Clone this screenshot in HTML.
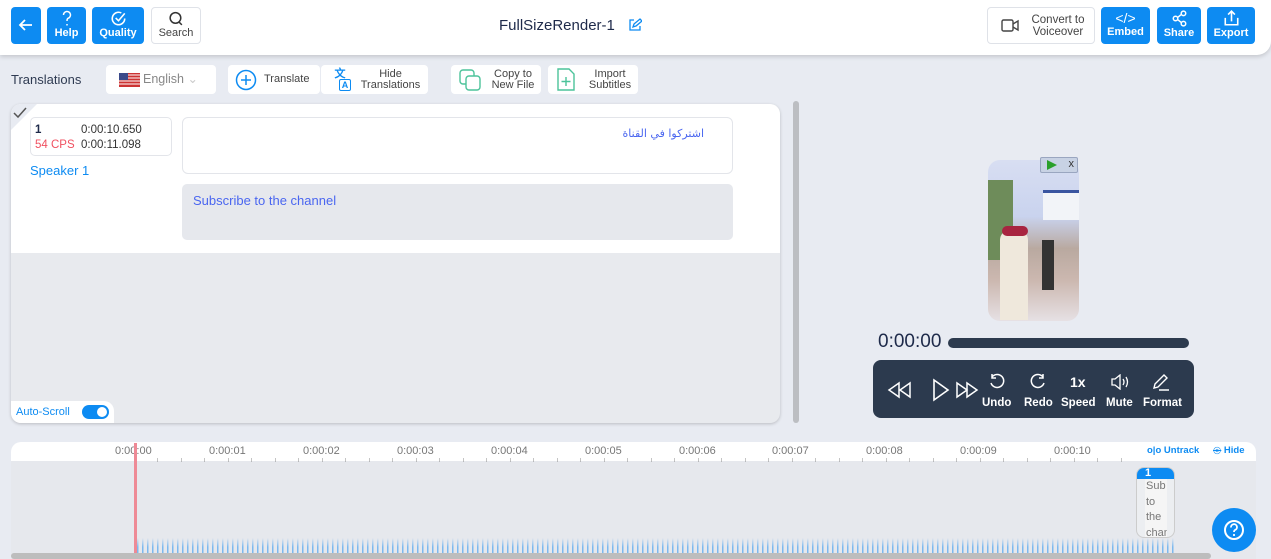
<!DOCTYPE html>
<html><head><meta charset="utf-8"><style>
*{box-sizing:border-box;margin:0;padding:0}
body{width:1271px;height:559px;overflow:hidden;background:#e8ebf2;font-family:"Liberation Sans","DejaVu Sans",sans-serif;position:relative}
.abs{position:absolute}
.hdr{left:0;top:0;width:1271px;height:55px;background:#fff;border-bottom-right-radius:14px;box-shadow:0 2px 4px rgba(0,0,0,.15)}
.bb{position:absolute;top:7px;height:37px;background:#0d8bf2;border-radius:4px;color:#fff;font-size:11px;font-weight:bold;text-align:center}
.bb svg{display:block;margin:3px auto 0}
.wb{position:absolute;background:#fff;border:1px solid #dfe2e8;border-radius:4px;color:#444;font-size:11px;text-align:center}
.tb{position:absolute;top:65px;height:29px;background:#fff;border-radius:4px;font-size:11px;color:#444;line-height:11px}
.tl{position:absolute;font-size:11px;color:#777;top:445px}
</style></head><body>
<div class="abs hdr"></div>
<div class="bb" style="left:11px;width:30px"><svg width="18" height="18" viewBox="0 0 18 18" style="margin-top:9px"><path d="M15 9H3M8 4L3 9l5 5" stroke="#fff" stroke-width="1.8" fill="none"/></svg></div>
<div class="bb" style="left:47px;width:39px"><svg width="16" height="17" viewBox="0 0 16 17"><path d="M4.5 5a3.5 3.5 0 1 1 4.5 3.3c-1 .5-1 1.2-1 2.7M8 14v1.5" stroke="#fff" stroke-width="1.5" fill="none"/></svg>Help</div>
<div class="bb" style="left:92px;width:52px"><svg width="17" height="17" viewBox="0 0 15 15"><path d="M13 7.5A5.5 5.5 0 1 1 10 2.6M5 7l2.5 2.5L13 3" stroke="#fff" stroke-width="1.4" fill="none"/></svg>Quality</div>
<div class="wb" style="left:151px;top:7px;width:50px;height:37px;font-size:11px"><svg width="16" height="16" viewBox="0 0 15 15" style="display:block;margin:3px auto 0"><circle cx="7" cy="6.5" r="5" stroke="#333" stroke-width="1.4" fill="none"/><path d="M10 10l3 3" stroke="#333" stroke-width="1.4"/></svg>Search</div>
<div class="abs" style="left:499px;top:17px;font-size:15px;color:#1e2a4a">FullSizeRender-1</div>
<svg class="abs" style="left:628px;top:18px" width="14" height="14" viewBox="0 0 14 14"><path d="M6 2H2v10h10V8M5 9l1-3 6-5 2 2-6 5z" stroke="#0d8bf2" stroke-width="1.3" fill="none"/></svg>
<div class="wb" style="left:987px;top:7px;width:108px;height:37px;color:#444;font-size:11.5px;line-height:12px;padding:6px 0 0 34px;text-align:center"><svg class="abs" style="left:13px;top:10px" width="19" height="15" viewBox="0 0 19 15"><rect x="1" y="2" width="11" height="11" rx="1.5" stroke="#444" stroke-width="1.4" fill="none"/><path d="M12 6l5-3v9l-5-3" stroke="#444" stroke-width="1.4" fill="none"/></svg>Convert to<br>Voiceover</div>
<div class="bb" style="left:1101px;width:49px"><div style="font-size:14px;margin-top:3px;font-weight:normal">&lt;/&gt;</div>Embed</div>
<div class="bb" style="left:1157px;width:44px"><svg width="17" height="17" viewBox="0 0 15 15"><circle cx="11" cy="3" r="2" stroke="#fff" fill="none" stroke-width="1.3"/><circle cx="4" cy="7.5" r="2" stroke="#fff" fill="none" stroke-width="1.3"/><circle cx="11" cy="12" r="2" stroke="#fff" fill="none" stroke-width="1.3"/><path d="M6 6.5l3-2.5M6 8.5l3 2.5" stroke="#fff" stroke-width="1.3"/></svg>Share</div>
<div class="bb" style="left:1207px;width:48px"><svg width="17" height="17" viewBox="0 0 15 15"><path d="M7.5 10V1M4.5 4l3-3 3 3M2 7v6h11V7" stroke="#fff" stroke-width="1.4" fill="none"/></svg>Export</div>

<div class="abs" style="left:11px;top:72px;font-size:13px;color:#2f3b52">Translations</div>
<div class="tb" style="left:106px;width:110px;font-size:12.5px;color:#888;padding-top:9px;padding-left:37px">English <span style="color:#ccc">&#8964;</span>
<svg class="abs" style="left:13px;top:8px" width="21" height="14" viewBox="0 0 21 14"><rect width="21" height="14" fill="#c33"/><path d="M0 2h21M0 5h21M0 8h21M0 11h21" stroke="#fff" stroke-width="1"/><rect width="9" height="7" fill="#3b4a8a"/></svg></div>
<div class="tb" style="left:228px;width:92px;padding:9px 0 0 36px">Translate<svg class="abs" style="left:7px;top:4px" width="22" height="22" viewBox="0 0 22 22"><circle cx="11" cy="11" r="9.5" stroke="#0d8bf2" stroke-width="1.5" fill="none"/><path d="M11 6v10M6 11h10" stroke="#0d8bf2" stroke-width="1.5"/></svg></div>
<div class="tb" style="left:321px;width:107px;padding:4px 0 0 32px;text-align:center">Hide<br>Translations<div class="abs" style="left:8px;top:4px;width:22px;height:22px;font-size:11px;color:#0d8bf2;font-weight:bold">文<span style="position:absolute;left:10px;top:10px;border:1.3px solid #0d8bf2;border-radius:2px;width:12px;height:12px;font-size:9px;line-height:10px;text-align:center">A</span></div></div>
<div class="tb" style="left:451px;width:90px;padding:4px 0 0 34px;text-align:center">Copy to<br>New File<svg class="abs" style="left:8px;top:4px" width="22" height="22" viewBox="0 0 22 22"><rect x="1" y="1" width="14" height="14" rx="3" stroke="#4cc39a" stroke-width="1.4" fill="none"/><rect x="7" y="7" width="14" height="14" rx="3" stroke="#4cc39a" stroke-width="1.4" fill="#fff"/></svg></div>
<div class="tb" style="left:548px;width:90px;padding:4px 0 0 34px;text-align:center">Import<br>Subtitles<svg class="abs" style="left:9px;top:3px" width="18" height="23" viewBox="0 0 18 23"><path d="M1 1h11l5 5v16H1z" stroke="#4cc39a" stroke-width="1.4" fill="none"/><path d="M9 9v9M4.5 13.5h9" stroke="#4cc39a" stroke-width="1.4"/></svg></div>

<div class="abs" style="left:11px;top:104px;width:769px;height:319px;background:#e8eaee;border-radius:10px;box-shadow:0 1px 3px rgba(0,0,0,.2);overflow:hidden">
 <div style="position:absolute;left:0;top:0;width:769px;height:149px;background:#fff"></div>
 <div style="position:absolute;left:0;top:0;width:0;height:0;border-top:26px solid #e8ebf2;border-right:26px solid transparent"></div>
 <svg class="abs" style="left:2px;top:3px" width="14" height="12" viewBox="0 0 14 12"><path d="M1 6l4 4 8-9" stroke="#555" stroke-width="1.5" fill="none"/></svg>
 <div class="abs" style="left:19px;top:13px;width:142px;height:39px;border:1px solid #e3e5ea;border-radius:5px;font-size:11.5px;line-height:15px;padding:5px 0 0 4px;color:#333">
 <b style="color:#1e2a4a">1</b><span style="position:absolute;left:50px">0:00:10.650</span><br><span style="color:#f05060">54 CPS</span><span style="position:absolute;left:50px">0:00:11.098</span></div>
 <div class="abs" style="left:19px;top:59px;font-size:13px;color:#0d8bf2">Speaker 1</div>
 <div class="abs" style="left:171px;top:13px;width:551px;height:57px;border:1px solid #e3e5ea;border-radius:6px;font-size:11px;color:#4a66f0;text-align:right;padding:9px 28px 0 0;font-family:'DejaVu Sans',sans-serif" dir="rtl">اشتركوا في القناة</div>
 <div class="abs" style="left:171px;top:80px;width:551px;height:56px;background:#e6e8ed;border-radius:5px;font-size:13px;color:#4a66f0;padding:9px 0 0 11px">Subscribe to the channel</div>
 <div class="abs" style="left:0;top:297px;width:103px;height:24px;background:#fff;border-top-right-radius:10px;font-size:11px;color:#0d8bf2;padding:5px 0 0 5px">Auto-Scroll<span style="position:absolute;left:71px;top:4px;width:27px;height:14px;background:#0d8bf2;border-radius:7px"><span style="position:absolute;right:2px;top:2px;width:10px;height:10px;background:#fff;border-radius:5px"></span></span></div>
</div>
<div class="abs" style="left:793px;top:101px;width:6px;height:322px;background:#bcbec2;border-radius:3px"></div>

<div class="abs" style="left:988px;top:160px;width:91px;height:161px;border-radius:12px;overflow:hidden;background:linear-gradient(180deg,#d8def2 0%,#c9d3ee 35%,#b9a9a0 55%,#ccb8b0 75%,#e6e0e4 100%)">
 <div class="abs" style="left:0;top:20px;width:25px;height:80px;background:#6e8c5a"></div>
 <div class="abs" style="left:55px;top:30px;width:36px;height:30px;background:#f2f4f8;border-top:3px solid #3a55a0"></div>
 <div class="abs" style="left:12px;top:70px;width:28px;height:90px;background:#efe8dc;border-radius:10px 10px 0 0"></div>
 <div class="abs" style="left:14px;top:66px;width:26px;height:10px;background:#a82440;border-radius:6px"></div>
 <div class="abs" style="left:54px;top:80px;width:12px;height:50px;background:#333"></div>
</div>
<div class="abs" style="left:1040px;top:157px;width:38px;height:16px;background:#c8d2e4;border:1px solid #9aa6c0;border-radius:2px"><span style="position:absolute;left:6px;top:2px;border-left:10px solid #2aa02a;border-top:5px solid transparent;border-bottom:5px solid transparent"></span><span style="position:absolute;right:3px;top:0;font-size:11px;color:#333">x</span></div>

<div class="abs" style="left:878px;top:331px;font-size:19px;color:#1e2a4a">0:00:00</div>
<div class="abs" style="left:948px;top:338px;width:241px;height:10px;background:#2c3a4e;border-radius:5px"></div>
<div class="abs" style="left:873px;top:360px;width:321px;height:58px;background:#2c3a4e;border-radius:8px;color:#fff;font-size:11.5px;font-weight:bold">
 <svg class="abs" style="left:14px;top:17px" width="92" height="26" viewBox="0 0 92 26"><path d="M12 6L2 13l10 7zM23 6l-10 7 10 7z" stroke="#fff" stroke-width="1.5" fill="none"/><path d="M47 3v20l14-10z" stroke="#fff" stroke-width="1.6" fill="none"/><path d="M70 6l10 7-10 7zM80 6l10 7-10 7z" stroke="#fff" stroke-width="1.5" fill="none"/></svg>
 <svg class="abs" style="left:115px;top:13px" width="18" height="18" viewBox="0 0 18 18"><path d="M4 4a6.5 6.5 0 1 1-1 6M4 1v4h4" stroke="#fff" stroke-width="1.5" fill="none"/></svg>
 <div class="abs" style="left:109px;top:37px">Undo</div>
 <svg class="abs" style="left:156px;top:13px" width="18" height="18" viewBox="0 0 18 18"><path d="M14 4a6.5 6.5 0 1 0 1 6M14 1v4h-4" stroke="#fff" stroke-width="1.5" fill="none"/></svg>
 <div class="abs" style="left:151px;top:37px">Redo</div>
 <div class="abs" style="left:197px;top:14px;font-size:14px">1x</div>
 <div class="abs" style="left:188px;top:37px">Speed</div>
 <svg class="abs" style="left:237px;top:14px" width="20" height="16" viewBox="0 0 20 16"><path d="M2 5h3l5-4v14l-5-4H2z" stroke="#fff" stroke-width="1.3" fill="none"/><path d="M13 5q2 3 0 6M16 3q3 5 0 10" stroke="#fff" stroke-width="1.3" fill="none"/></svg>
 <div class="abs" style="left:233px;top:37px">Mute</div>
 <svg class="abs" style="left:278px;top:12px" width="20" height="20" viewBox="0 0 20 20"><path d="M3 16l1-4 9-9 3 3-9 9zM8 18h10" stroke="#fff" stroke-width="1.4" fill="none"/></svg>
 <div class="abs" style="left:270px;top:37px">Format</div>
</div>

<div class="abs" style="left:11px;top:442px;width:1245px;height:117px;background:#e6e8ed;border-radius:10px 10px 0 0;overflow:hidden">
 <div class="abs" style="left:0;top:0;width:1245px;height:19px;background:#fff"></div>
 <div class="abs" style="top:16px;height:4px;background:repeating-linear-gradient(90deg,transparent 0,transparent 23px,#888 23px,#888 24px) 0 0/23.5px 4px;left:100px;width:1030px"></div>
</div>
<div class="tl" style="left:115px">0:00:00</div><div class="tl" style="left:209px">0:00:01</div><div class="tl" style="left:303px">0:00:02</div><div class="tl" style="left:397px">0:00:03</div><div class="tl" style="left:491px">0:00:04</div><div class="tl" style="left:585px">0:00:05</div><div class="tl" style="left:679px">0:00:06</div><div class="tl" style="left:772px">0:00:07</div><div class="tl" style="left:866px">0:00:08</div><div class="tl" style="left:960px">0:00:09</div><div class="tl" style="left:1054px">0:00:10</div>
<div class="abs" style="left:1147px;top:445px;font-size:9.5px;color:#0d8bf2;font-weight:bold">o|o Untrack</div>
<div class="abs" style="left:1213px;top:445px;font-size:9.5px;color:#0d8bf2;font-weight:bold"><s>◎</s> Hide</div>
<div class="abs" style="left:137px;top:538px;width:1038px;height:15px;background:repeating-linear-gradient(90deg,#7cb8ee 0,#7cb8ee 1.5px,transparent 1.5px,transparent 5px);-webkit-mask:linear-gradient(180deg,transparent 0,#000 60%)"></div>
<div class="abs" style="left:134px;top:443px;width:3px;height:112px;background:#ee8a96"></div>
<div class="abs" style="left:11px;top:553px;width:1200px;height:6px;background:#bdbdbd;border-radius:3px"></div>
<div class="abs" style="left:1136px;top:467px;width:39px;height:71px;border:1px solid #ccc;border-radius:8px;background:#eceef1;overflow:hidden;font-size:11px;color:#777;line-height:15.5px">
 <div style="background:#0d8bf2;color:#fff;font-weight:bold;height:11px;line-height:11px;padding-left:8px">1</div>
 <div style="margin-left:8px;width:22px;background:#f5f5f5;padding-left:1px;height:60px;overflow:hidden">Sub to the channel</div>
</div>
<div class="abs" style="left:1212px;top:508px;width:44px;height:44px;border-radius:22px;background:#0d8bf2"><svg class="abs" style="left:11px;top:11px" width="22" height="22" viewBox="0 0 22 22"><circle cx="11" cy="11" r="9" stroke="#fff" stroke-width="2" fill="none"/><path d="M8 8.5a3 3 0 1 1 4 2.5c-1 .5-1 1-1 2" stroke="#fff" stroke-width="1.8" fill="none"/><circle cx="11" cy="16" r="1.1" fill="#fff"/></svg></div>
</body></html>
